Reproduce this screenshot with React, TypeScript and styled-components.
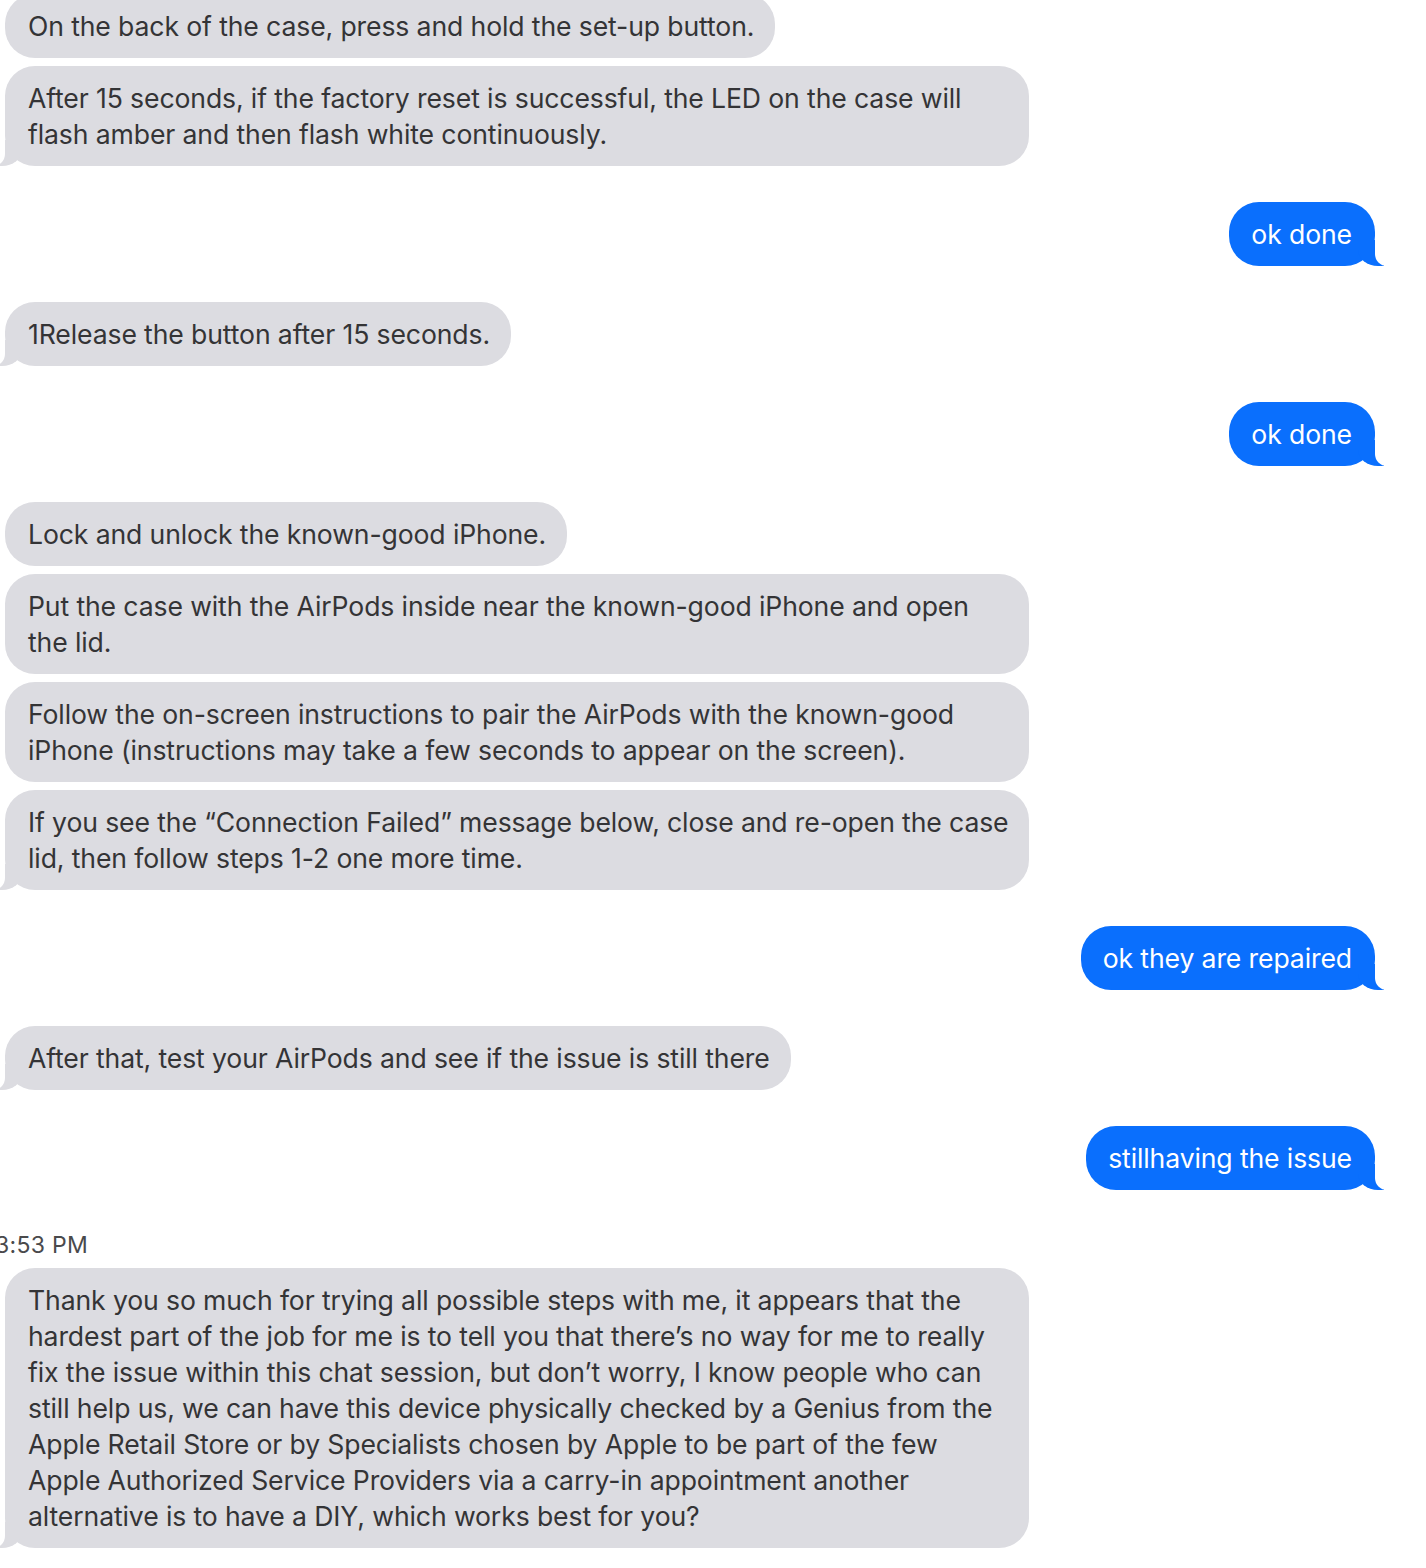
import styled, { createGlobalStyle } from 'styled-components';

const GRAY = '#dcdce1';
const BLUE = '#0a6ffd';

type Msg =
  | { kind: 'them'; lines: string[] }
  | { kind: 'me'; text: string }
  | { kind: 'time'; text: string };

const thread: Msg[] = [
  {
    kind: 'them',
    lines: [
      'On the back of the case, press and hold the set-up button.',
      'After 15 seconds, if the factory reset is successful, the LED on the case will flash amber and then flash white continuously.',
    ],
  },
  { kind: 'me', text: 'ok done' },
  { kind: 'them', lines: ['1Release the button after 15 seconds.'] },
  { kind: 'me', text: 'ok done' },
  {
    kind: 'them',
    lines: [
      'Lock and unlock the known-good iPhone.',
      'Put the case with the AirPods inside near the known-good iPhone and open the lid.',
      'Follow the on-screen instructions to pair the AirPods with the known-good iPhone (instructions may take a few seconds to appear on the screen).',
      'If you see the \u201cConnection Failed\u201d message below, close and re-open the case lid, then follow steps 1-2 one more time.',
    ],
  },
  { kind: 'me', text: 'ok they are repaired' },
  { kind: 'them', lines: ['After that, test your AirPods and see if the issue is still there'] },
  { kind: 'me', text: 'stillhaving the issue' },
  { kind: 'time', text: '3:53 PM' },
  {
    kind: 'them',
    lines: [
      'Thank you so much for trying all possible steps with me, it appears that the hardest part of the job for me is to tell you that there\u2019s no way for me to really fix the issue within this chat session, but don\u2019t worry, I know people who can still help us, we can have this device physically checked by a Genius from the Apple Retail Store or by Specialists chosen by Apple to be part of the few Apple Authorized Service Providers via a carry-in appointment another alternative is to have a DIY, which works best for you?',
    ],
  },
];

export default function App() {
  return (
    <>
      <GlobalStyle />
      <Chat>
        {thread.map((m, i) => {
          if (m.kind === 'time') return <Stamp key={i}>{m.text}</Stamp>;
          if (m.kind === 'me')
            return (
              <OutRow key={i}>
                <Bubble $me $tail>
                  <Text>{m.text}</Text>
                </Bubble>
              </OutRow>
            );
          return (
            <InGroup key={i}>
              {m.lines.map((line, j) => (
                <Bubble key={j} $tail={j === m.lines.length - 1}>
                  <Text>{line}</Text>
                </Bubble>
              ))}
            </InGroup>
          );
        })}
      </Chat>
    </>
  );
}

const GlobalStyle = createGlobalStyle`
  html, body {
    margin: 0;
    background: #fff;
    overflow: hidden;
  }
  body {
    font-family: Inter, "Open Sans", Roboto, sans-serif;
  }
`;

const Chat = styled.div`
  display: flex;
  flex-direction: column;
  gap: 36px;
  width: 1426px;
  margin-top: -6px;
  padding: 0 51px 0 5px;
  box-sizing: border-box;
`;

const InGroup = styled.div`
  display: flex;
  flex-direction: column;
  align-items: flex-start;
  gap: 8px;
`;

const OutRow = styled.div`
  display: flex;
  justify-content: flex-end;
`;

const Stamp = styled.div`
  margin: 6px 0 -26px -10px;
  height: 26px;
  font-size: 23px;
  line-height: 26px;
  color: #4a4a4c;
  letter-spacing: 0.3px;
`;

/* trailing space sits on the last line only, so wrapped lines may run a bit wider */
const Text = styled.span`
  padding-right: 6px;
`;

const Bubble = styled.div<{ $me?: boolean; $tail?: boolean }>`
  position: relative;
  max-width: 1024px;
  box-sizing: border-box;
  padding: ${(p) => (p.$me ? '14px 17px 14px 22px' : '14px 15px 14px 23px')};
  border-radius: 30px;
  background: ${(p) => (p.$me ? BLUE : GRAY)};
  color: ${(p) => (p.$me ? '#fff' : '#343436')};
  font-size: 26.6px;
  line-height: 36px;
  letter-spacing: -0.12px;

  ${(p) =>
    p.$tail &&
    `
    &::before {
      content: '';
      position: absolute;
      bottom: 0;
      ${p.$me ? 'right: -9px;' : 'left: -9px;'}
      width: 26px;
      height: 26px;
      background: ${p.$me ? BLUE : GRAY};
      ${p.$me ? 'border-bottom-left-radius: 20px 16px;' : 'border-bottom-right-radius: 20px 16px;'}
    }
    &::after {
      content: '';
      position: absolute;
      bottom: 0;
      ${p.$me ? 'right: -30px;' : 'left: -30px;'}
      width: 30px;
      height: 28px;
      background: #fff;
      ${p.$me ? 'border-bottom-left-radius: 12px;' : 'border-bottom-right-radius: 12px;'}
    }
  `}
`;
